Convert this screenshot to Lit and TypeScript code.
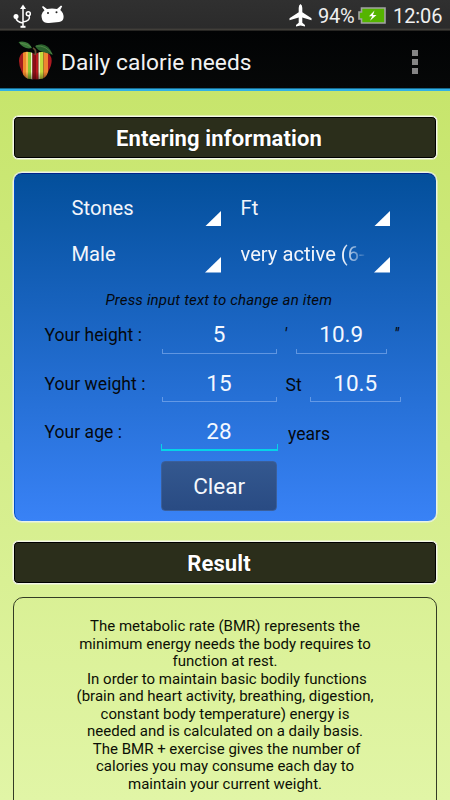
import { LitElement, html, svg, css } from "lit";
import { customElement, property } from "lit/decorators.js";
import { classMap } from "lit/directives/class-map.js";

@customElement("spinner-item")
class SpinnerItem extends LitElement {
  static styles = css`
    :host { display: flex; justify-content: space-between; height: 46.5px; color: #f2f5fb; }
    .label { width: 132px; font-size: 20.2px; line-height: 45px; white-space: nowrap; flex: none; }
    .fade { -webkit-mask-image: linear-gradient(90deg, #000 102px, transparent 126px); mask-image: linear-gradient(90deg, #000 102px, transparent 126px); }
    .corner { width: 16px; height: 15.5px; margin-top: 25px; fill: #fff; flex: none; }
  `;
  @property() label = "";
  @property({ type: Boolean }) fade = false;
  render() {
    return html`<div class=${classMap({ label: true, fade: this.fade })}>${this.label}</div>
      <svg class="corner" viewBox="0 0 16 15.5"><path d="M16 0V15.5H0Z" /></svg>`;
  }
}

@customElement("number-field")
class NumberField extends LitElement {
  static styles = css`
    :host { display: block; height: 36px; }
    .field { position: relative; height: 36px; line-height: 34.5px; font-size: 22.5px; text-align: center; color: #f4f8ff; }
    .field::after { content: ""; position: absolute; left: 0; right: 0; bottom: -0.5px; height: 4px; border: 1px solid rgba(140, 180, 240, 0.6); border-top: 0; }
    .active::after { left: -0.5px; right: -1px; height: 5px; border-color: #06d3e8; border-bottom-width: 2px; bottom: -1px; }
  `;
  @property() value = "";
  @property({ type: Boolean }) active = false;
  render() {
    return html`<div class=${classMap({ field: true, active: this.active })}>${this.value}</div>`;
  }
}

@customElement("app-root")
class AppRoot extends LitElement {
  static styles = css`
    :host { display: block; font-family: Roboto, "Noto Sans", sans-serif; }
    * { box-sizing: border-box; }
    .screen { width: 450px; height: 800px; overflow: hidden; display: flex; flex-direction: column; background: #000; }
    .status { height: 31px; flex: none; display: flex; align-items: center; padding: 0 8px 0 13px; background: linear-gradient(#303030, #2b2b2b 28px, #3d3b37 29px, #45423c 30px, #0a0a0a 31px); color: #f0f0f0; }
    .status svg { display: block; flex: none; }
    .usb { width: 19px; height: 24px; }
    .droid { width: 25px; height: 20px; margin: -2px 0 0 8px; }
    .plane { width: 23px; height: 23px; margin-left: auto; }
    .status-text { font-size: 20px; line-height: 32px; white-space: nowrap; }
    .percent { width: 36px; margin: 0 4px 0 6px; letter-spacing: -0.3px; }
    .clock { width: 49px; margin-left: 7px; letter-spacing: -0.1px; }
    .battery { width: 28px; height: 17px; }
    .actionbar { height: 57px; flex: none; display: flex; align-items: center; background: linear-gradient(#020304, #060808); padding: 0 32px 0 18px; }
    .apple { width: 37px; height: 40px; flex: none; display: block; margin-top: 3px; }
    .title { font-size: 22.7px; letter-spacing: 0.07px; margin: 6px 0 0 6px; color: #f2f2f2; white-space: nowrap; }
    .menu { margin: 5px 0 0 auto; display: flex; flex-direction: column; gap: 3.4px; }
    .dot { width: 6px; height: 6px; background: #858585; }
    .rule { height: 3px; flex: none; background: linear-gradient(#176a8e 1px, #31b1e8 1px); }
    .body { flex: 1; min-height: 0; padding: 25px 13px 0 13px; background: linear-gradient(#c7e56c, #e1f5a6); }
    .heading { height: 43px; border: 1px solid #f3f7e6; border-radius: 5px; background: #2b2e1b; box-shadow: inset 0 0 0 1px #000, 0 0 0 0.5px #f3f7e6; color: #fff; font-weight: 700; font-size: 22px; letter-spacing: 0.12px; line-height: 43.5px; text-align: center; padding-right: 12px; text-shadow: 0 0 1px #000; }
    .card { height: 350px; margin: 12.5px 0 19.5px; border: 1px solid #eaf3e4; border-radius: 9px; background: linear-gradient(#034f9b, #3982f6); box-shadow: inset 0 1px 0 #00238a, inset 1px 0 0 #004fc8, 0 0 0 0.5px #eaf3e4; padding-top: 13px; overflow: hidden; color: #05080d; }
    .spinners { display: grid; grid-template-columns: 149.5px 149.5px; column-gap: 19.5px; padding-left: 57.5px; }
    .hint { font-style: italic; font-size: 15px; letter-spacing: 0.17px; line-height: 20px; padding-left: 91.5px; margin-top: 11px; white-space: nowrap; }
    .row { display: flex; align-items: center; height: 36px; margin-top: 12.7px; padding-left: 30.5px; font-size: 17.5px; white-space: nowrap; }
    .first { margin-top: 7.5px; }
    .label { width: 117px; flex: none; letter-spacing: 0.05px; }
    .wide { width: 115px; flex: none; }
    .narrow { width: 90.5px; flex: none; }
    .unit { flex: none; }
    .foot { width: 19.5px; padding-left: 7.5px; font-style: italic; }
    .inch { padding-left: 7.5px; font-style: italic; }
    .stone { width: 33.5px; padding: 2px 0 0 9px; }
    .years { padding: 3px 0 0 11.5px; }
    .clear { display: block; width: 115.5px; height: 50px; margin: 11px 0 0 147.4px; border: 1px solid #3a5f9c; border-radius: 4px; background: linear-gradient(#34588f, #294b83); color: #f5f8fd; font-family: inherit; font-size: 22.5px; line-height: 48px; padding: 0; text-align: center; }
    .result { height: 240px; margin-top: 12.5px; border: 1px solid #343c24; border-radius: 10px; padding-top: 20.5px; font-size: 15px; line-height: 17.5px; text-align: center; color: #0c1005; white-space: pre; }
  `;

  private slices() {
    const cols = ["#a31c1e", "#ee8a2c", "#f7b850", "#8ac634", "#f0f0c8", "#8e0c16", "#b8181f", "#f0f0c0", "#c3dc3c", "#ee8530", "#ad1a22"];
    const edges = [0, 5, 8, 10, 13, 14.5, 17.5, 20.5, 22, 25.5, 30, 38];
    return cols.map((c, i) => svg`<rect x=${edges[i]} y="8" width=${edges[i + 1] - edges[i]} height="32" fill=${c} />`);
  }

  render() {
    const lines = [
      "The metabolic rate (BMR) represents the",
      "minimum energy needs the body requires to",
      "function at rest.",
      " In order to maintain basic bodily functions",
      "(brain and heart activity, breathing, digestion,",
      "constant body temperature) energy is",
      "needed and is calculated on a daily basis.",
      " The BMR + exercise gives the number of",
      "calories you may consume each day to",
      "maintain your current weight.",
    ];
    return html`<div class="screen">
      <div class="status">
        <svg class="usb" viewBox="0 0 19 24" fill="none" stroke="#fff" stroke-width="1.5">
          <path d="M10 3V23M3 13Q3 18 10 19M16 11Q18 17 10 18" />
          <path d="M7.5 22.8H12.5" stroke-width="2" />
          <g fill="#fff" stroke="none"><path d="M10 0.5L13 5H7Z" /><circle cx="3" cy="12.5" r="2.5" /></g>
          <circle cx="15.3" cy="9.8" r="2" />
        </svg>
        <svg class="droid" viewBox="0 0 25 20">
          <path d="M3 1L7 4Q12 2.8 17 4L21 0.5L22.2 1.3L20.3 5Q24 8 23.5 13Q23 16.5 19 17L9 18Q4 18.5 2.3 15Q0 9 4.5 5.3L2 2Z" fill="#fff" />
          <circle cx="8" cy="8" r="1" fill="#222" /><circle cx="16.5" cy="7.2" r="1" fill="#222" />
        </svg>
        <svg class="plane" viewBox="0 0 23 23" fill="#fff"><path d="M11.5 0Q13.3 1 13.3 4V8.2L22.5 14.2V16.3L13.3 13.4V18.8L16 21V22.5L11.5 21.6L7 22.5V21L9.7 18.8V13.4L0.5 16.3V14.2L9.7 8.2V4Q9.7 1 11.5 0Z" /></svg>
        <span class="status-text percent">94%</span>
        <svg class="battery" viewBox="0 0 28 17">
          <path d="M3.5 1H27V16H3.5V12H1V5H3.5Z" fill="#55b400" stroke="#a3a3a3" stroke-width="1.6" />
          <path d="M16.5 3.5L11 9.3H14.3L12 13.7L18.5 7.9H15Z" fill="#fff" />
        </svg>
        <span class="status-text clock">12:06</span>
      </div>
      <div class="actionbar">
        <svg class="apple" viewBox="0 0 37 40">
          <defs>
            <clipPath id="fruit"><path d="M17 13Q7 8 2.5 14Q-1 20 3.5 30Q6.5 38 12 38Q17 38.5 22 38Q28 38 30.5 30Q36 20 32 14Q27 8 17 13Z" /></clipPath>
            <linearGradient id="shade" x2="0" y2="1"><stop offset=".7" stop-color="#200" stop-opacity="0" /><stop offset="1" stop-color="#200" stop-opacity=".55" /></linearGradient>
          </defs>
          <g clip-path="url(#fruit)">${this.slices()}<rect y="9" width="38" height="31" fill="url(#shade)" /></g>
          <path d="M17 14Q19 9 15 7" fill="none" stroke="#665033" stroke-width="1.8" />
          <path d="M0.5 1Q10-1 14 7Q6 9 0.5 1Z" fill="#397638" />
          <path d="M17 5Q29-1 35 14Q29 12 25 11Q20 10 17 5Z" fill="#28602c" />
          <path d="M18 5Q28 4 34 13M2 2Q9 3 13 6" fill="none" stroke="#649352" stroke-width=".7" />
        </svg>
        <div class="title">Daily calorie needs</div>
        <div class="menu"><div class="dot"></div><div class="dot"></div><div class="dot"></div></div>
      </div>
      <div class="rule"></div>
      <div class="body">
        <div class="heading">Entering information</div>
        <div class="card">
          <div class="spinners">
            <spinner-item label="Stones"></spinner-item>
            <spinner-item label="Ft"></spinner-item>
            <spinner-item label="Male"></spinner-item>
            <spinner-item label="very active (6-" fade></spinner-item>
          </div>
          <div class="hint">Press input text to change an item</div>
          <div class="row first">
            <div class="label">Your height :</div>
            <number-field class="wide" value="5"></number-field>
            <div class="unit foot">'</div>
            <number-field class="narrow" value="10.9"></number-field>
            <div class="unit inch">''</div>
          </div>
          <div class="row">
            <div class="label">Your weight :</div>
            <number-field class="wide" value="15"></number-field>
            <div class="unit stone">St</div>
            <number-field class="narrow" value="10.5"></number-field>
          </div>
          <div class="row">
            <div class="label">Your age :</div>
            <number-field class="wide" value="28" active></number-field>
            <div class="unit years">years</div>
          </div>
          <button class="clear">Clear</button>
        </div>
        <div class="heading">Result</div>
        <div class="result">${lines.map((l) => html`<div>${l}</div>`)}</div>
      </div>
    </div>`;
  }
}
